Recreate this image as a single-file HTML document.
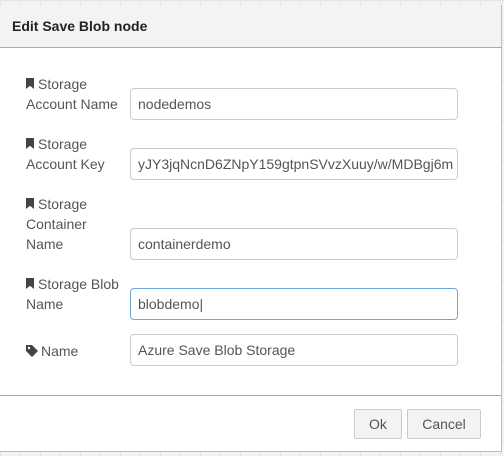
<!DOCTYPE html>
<html><head><style>
body{margin:0;width:504px;height:456px;background:#f3f3f3;font-family:"Liberation Sans",sans-serif;position:relative;overflow:hidden;
background-image:linear-gradient(90deg,#e4e4e4 1px,transparent 1px),linear-gradient(#e4e4e4 1px,transparent 1px);background-size:20px 20px;}
.dlg{position:absolute;left:0;top:5px;width:501px;height:446px;background:#fff;border-right:1px solid #bbb;border-bottom:1px solid #bbb;}
.hdr{height:42px;background:#f3f3f3;border-bottom:1px solid #aaa;font-weight:bold;font-size:14px;color:#222;padding:0 12px;line-height:42px}
.lbl{position:absolute;left:26px;font-size:14px;color:#555;line-height:20px;width:100px}
.in{position:absolute;left:130px;width:312px;height:30px;border:1px solid #ccc;border-radius:4px;font-size:14px;color:#555;line-height:30px;padding:0 7px;white-space:nowrap;overflow:hidden}
.bm{display:inline-block;width:8px;height:11px;background:#444;clip-path:polygon(0 0,100% 0,100% 100%,50% 70%,0 100%);margin-right:4px}
.foot{position:absolute;left:0;right:0;top:390px;border-top:1px solid #aaa}
.btn{position:absolute;top:404px;height:28px;border:1px solid #ccc;background:#f3f3f3;font-size:14px;color:#555;text-align:center;line-height:28px;border-radius:2px}
</style></head><body>
<div class="dlg">
<div class="hdr">Edit Save Blob node</div>
<div class="lbl" style="top:69px"><span class="bm"></span>Storage<br>Account Name</div>
<div class="in" style="top:83px">nodedemos</div>
<div class="lbl" style="top:129px"><span class="bm"></span>Storage<br>Account Key</div>
<div class="in" style="top:143px">yJY3jqNcnD6ZNpY159gtpnSVvzXuuy/w/MDBgj6m</div>
<div class="lbl" style="top:189px"><span class="bm"></span>Storage<br>Container<br>Name</div>
<div class="in" style="top:223px">containerdemo</div>
<div class="lbl" style="top:269px"><span class="bm"></span>Storage Blob<br>Name</div>
<div class="in" style="top:283px;border-color:#6ea6e0">blobdemo|</div>
<div class="lbl" style="top:336px"><svg width="12" height="12" viewBox="0 0 12 12" style="vertical-align:-1px;margin-right:3px"><path d="M0 0H6L12 6L6 12L0 6Z" fill="#444"/><circle cx="3" cy="3" r="1.2" fill="#fff"/></svg>Name</div>
<div class="in" style="top:329px">Azure Save Blob Storage</div>
<div class="foot"></div>
<div class="btn" style="left:354px;width:46px">Ok</div>
<div class="btn" style="left:407px;width:72px">Cancel</div>
</div>
</body></html>
